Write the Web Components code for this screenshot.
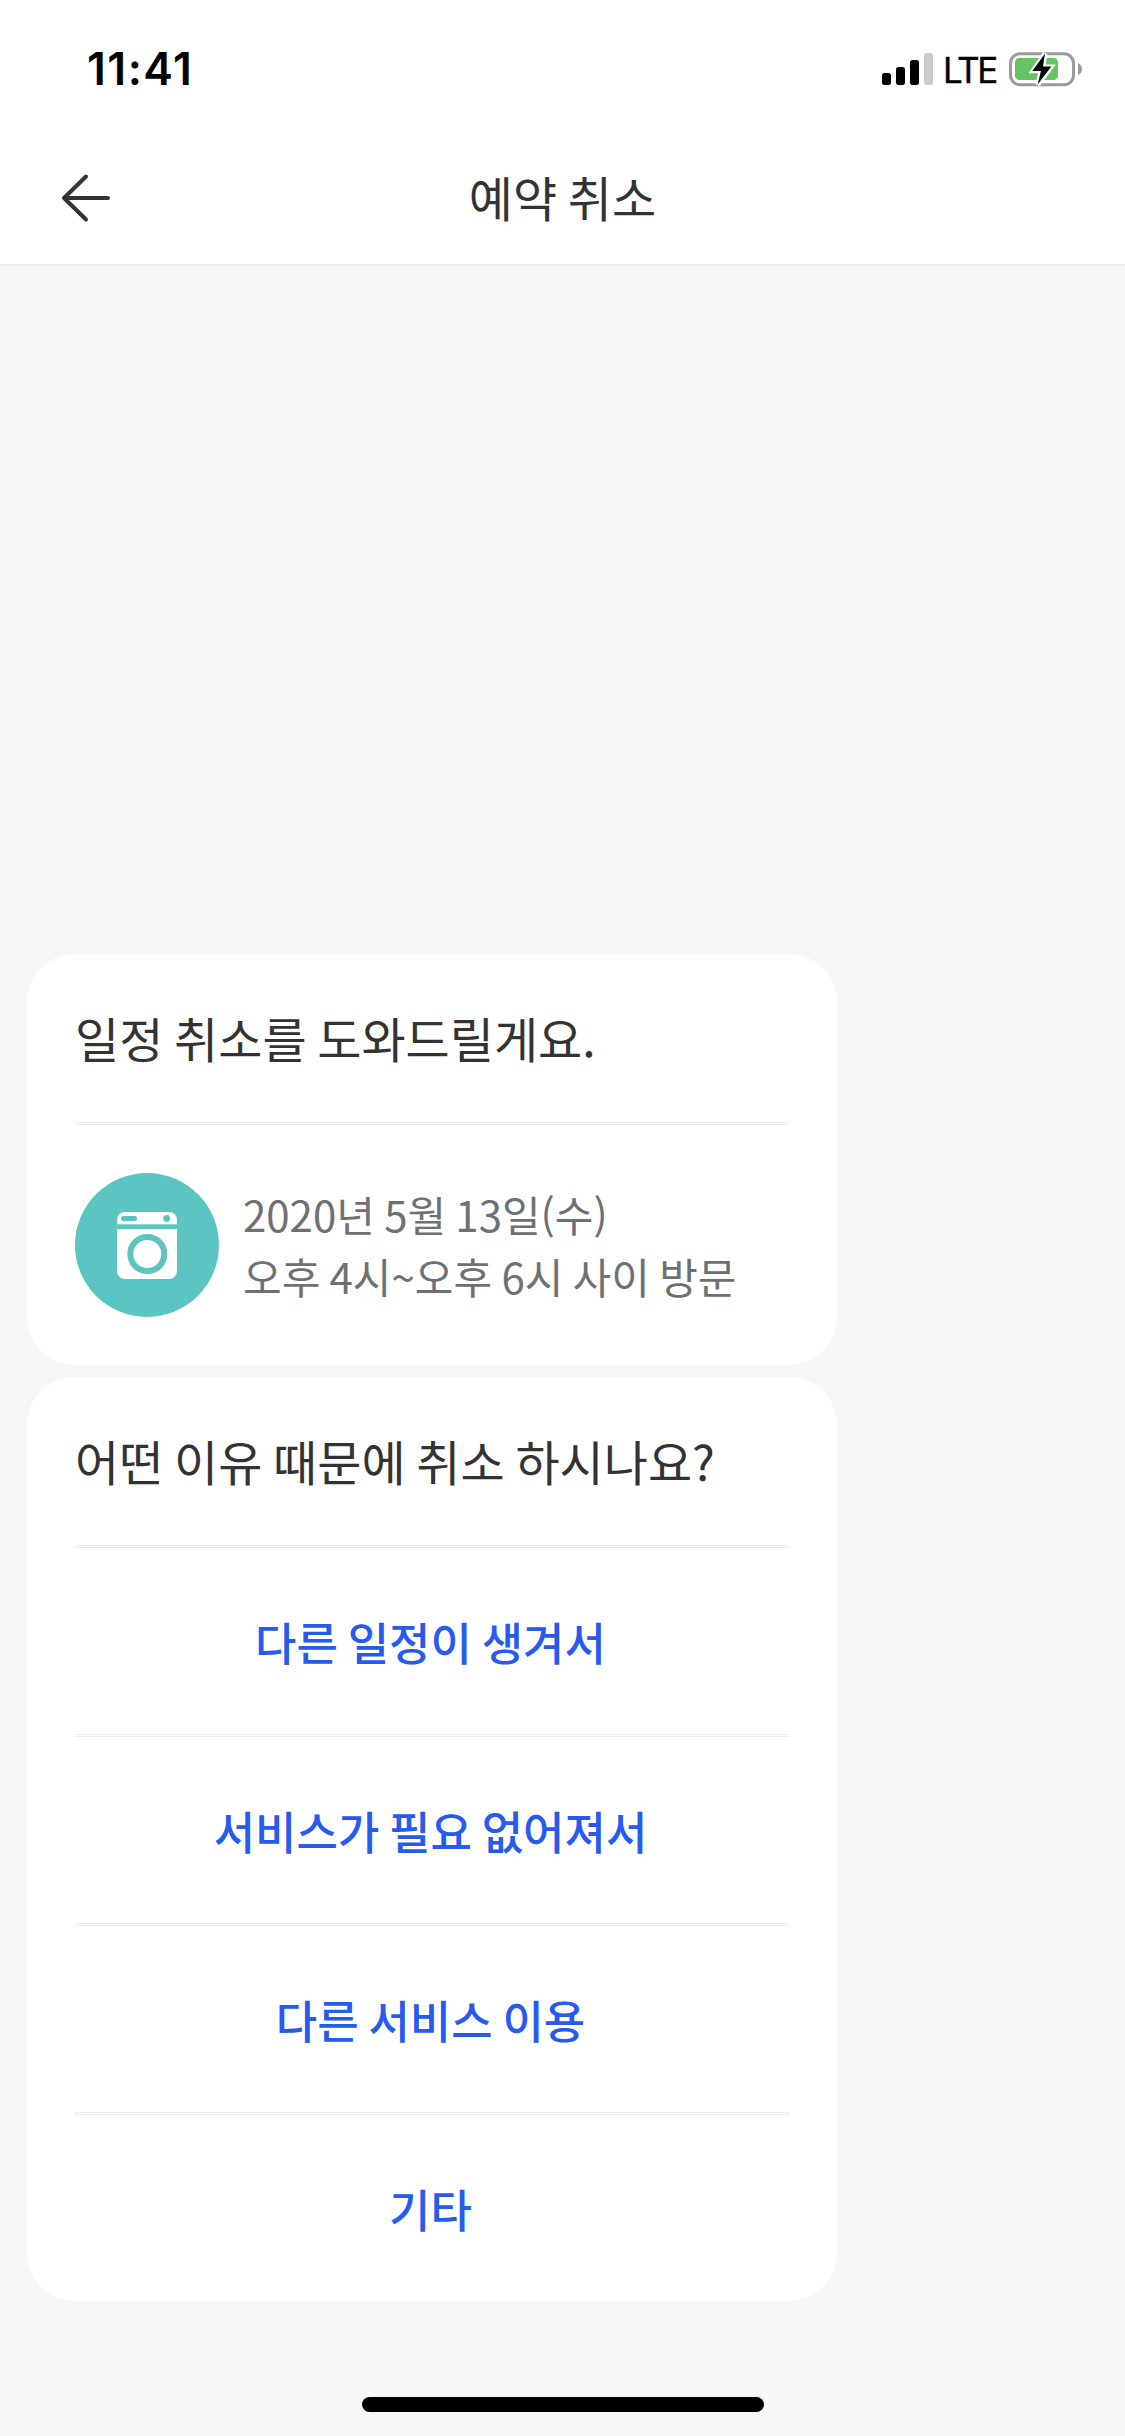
<!DOCTYPE html>
<html lang="ko">
<head>
<meta charset="utf-8">
<title>예약 취소</title>
<style>
  html, body { margin: 0; height: 100%; }
  body { background: #f7f7f9; font-family: "Noto Sans CJK KR", sans-serif; color: #333; }
</style>
</head>
<body>
<app-screen>
  <status-bar slot="top" time="11:41" network="LTE"></status-bar>
  <nav-bar slot="top">예약 취소</nav-bar>
  <chat-card>
    <span slot="title">일정 취소를 도와드릴게요.</span>
    <visit-info>
      <span slot="date">2020년 5월 13일(수)</span>
      <span slot="time">오후 4시~오후 6시 사이 방문</span>
    </visit-info>
  </chat-card>
  <chat-card>
    <span slot="title">어떤 이유 때문에 취소 하시나요?</span>
    <reason-option>다른 일정이 생겨서</reason-option>
    <reason-option>서비스가 필요 없어져서</reason-option>
    <reason-option>다른 서비스 이용</reason-option>
    <reason-option>기타</reason-option>
  </chat-card>
</app-screen>
<script>
const define = (name, html, setup) => {
  const template = document.createElement('template');
  template.innerHTML = html;
  customElements.define(name, class extends HTMLElement {
    constructor() {
      super();
      this.attachShadow({ mode: 'open' }).append(template.content.cloneNode(true));
    }
    connectedCallback() { if (setup) setup(this, this.shadowRoot); }
  });
};

define('app-screen', `
  <style>
    :host { display: flex; flex-direction: column; width: 1125px; height: 2436px; overflow: hidden; background: #f7f7f9; }
    header { flex: none; background: #fff; border-bottom: 2px solid #eee; }
    main { flex: 1; display: flex; flex-direction: column; justify-content: flex-end; align-items: flex-start; gap: 12px; padding: 0 27px 96px; }
    footer { display: flex; justify-content: center; padding-bottom: 24px; }
    .home { width: 402px; height: 15px; border-radius: 8px; background: #000; margin-left: 1px; }
  </style>
  <header><slot name="top"></slot></header>
  <main><slot></slot></main>
  <footer><div class="home"></div></footer>
`);

define('status-bar', `
  <style>
    :host { display: flex; justify-content: space-between; align-items: center; height: 132px; padding: 0 42px 0 87px; box-sizing: border-box; color: #000; font-family: Inter, sans-serif; }
    .time { font-size: 44.5px; font-weight: 600; line-height: 54px; margin-top: 6px; letter-spacing: 1.5px; }
    .right { display: flex; align-items: center; margin-top: 6px; height: 40px; }
    .net { box-sizing: border-box; font-size: 35px; font-weight: 400; line-height: 40px; width: 74px; padding-left: 10px; margin-top: 1px; letter-spacing: -2.4px; -webkit-text-stroke: .4px #000; }
    svg { display: block; }
  </style>
  <span class="time"></span>
  <div class="right">
    <svg width="51" height="40" viewBox="0 0 51 40">
      <rect x="0" y="24" width="9" height="12" rx="2.8"/>
      <rect x="14" y="18" width="9" height="18" rx="2.8"/>
      <rect x="28" y="11" width="9" height="25" rx="2.8"/>
      <rect x="42" y="4" width="9" height="32" rx="2.8" fill="#ccc"/>
    </svg>
    <span class="net"></span>
    <svg width="76" height="40" viewBox="0 0 76 40">
      <rect x="3.5" y="4.8" width="63" height="31" rx="9.5" fill="#fff" stroke="#9b9b9b" stroke-width="3"/>
      <rect x="8" y="9" width="43" height="22" rx="4.5" fill="#65c466"/>
      <path d="M71 14 Q75 16 75 20 Q75 24 71 26Z" fill="#9b9b9b"/>
      <path d="M38 4.5 L26.2 21.7 H34.2 L30.8 35.5 L43.8 18 H35.8Z" fill="#fff" stroke="#fff" stroke-width="5" stroke-miterlimit="4"/>
      <path d="M38 4.5 L25.4 22 H34 L30.6 35.5 L44.4 17.6 H36Z" fill="#000"/>
    </svg>
  </div>
`, (host, root) => {
  root.querySelector('.time').textContent = host.getAttribute('time');
  root.querySelector('.net').textContent = host.getAttribute('network');
});

define('nav-bar', `
  <style>
    :host { display: grid; grid-template-columns: 132px 1fr 132px; align-items: center; height: 132px; }
    svg { display: block; margin-left: 58px; }
    .title { text-align: center; font-size: 48px; line-height: 72px; color: #333; word-spacing: -2.7px; padding-bottom: 5px; }
  </style>
  <svg width="54" height="52" viewBox="0 0 54 52" fill="none" stroke="#333" stroke-width="4" stroke-linecap="round" stroke-linejoin="round">
    <path d="M6 26H50M28 4.5L6 26L28 47.5"/>
  </svg>
  <div class="title"><slot></slot></div>
`);

define('chat-card', `
  <style>
    :host { display: block; width: 810px; box-sizing: border-box; padding: 0 48px; background: #fff; border-radius: 48px; }
    .title { height: 168px; box-sizing: border-box; padding-top: 47px; font-size: 48px; line-height: 72px; color: #333; white-space: nowrap; word-spacing: -2.7px; }
  </style>
  <div class="title"><slot name="title"></slot></div>
  <slot></slot>
`);

define('visit-info', `
  <style>
    :host { display: block; }
    .line { height: 3px; box-sizing: border-box; border: 1px solid #eee; background: #fff; }
    .row { display: flex; align-items: center; gap: 24px; padding: 48px 0; }
    svg { display: block; flex: none; }
    .text { display: flex; flex-direction: column; font-size: 42px; line-height: 62px; color: #707073; white-space: nowrap; word-spacing: -2.5px; padding-bottom: 1px; }
  </style>
  <div class="line"></div>
  <div class="row">
    <svg width="144" height="144" viewBox="0 0 144 144">
      <circle cx="72" cy="72" r="72" fill="#5bc5c1"/>
      <rect x="42" y="39" width="60" height="67" rx="8" fill="#fff"/>
      <g fill="#5bc5c1">
        <rect x="42" y="51.3" width="60" height="4.7"/>
        <rect x="46" y="43" width="16" height="5" rx="2.5"/>
        <circle cx="91.7" cy="45.5" r="3.4"/>
      </g>
      <circle cx="72.3" cy="81" r="17" fill="#fff" stroke="#5bc5c1" stroke-width="6"/>
    </svg>
    <div class="text"><slot name="date"></slot><slot name="time"></slot></div>
  </div>
`);

define('reason-option', `
  <style>
    :host { display: block; }
    .line { height: 3px; box-sizing: border-box; border: 1px solid #eee; background: #fff; }
    button { display: block; width: 100%; height: 186px; box-sizing: border-box; padding: 1px 3px 0 0; border: 0; background: none; font: 500 45px/68px "Noto Sans CJK KR", sans-serif; color: #275bee; white-space: nowrap; word-spacing: -2.8px; }
  </style>
  <div class="line"></div>
  <button type="button"><slot></slot></button>
`);
</script>
</body>
</html>
